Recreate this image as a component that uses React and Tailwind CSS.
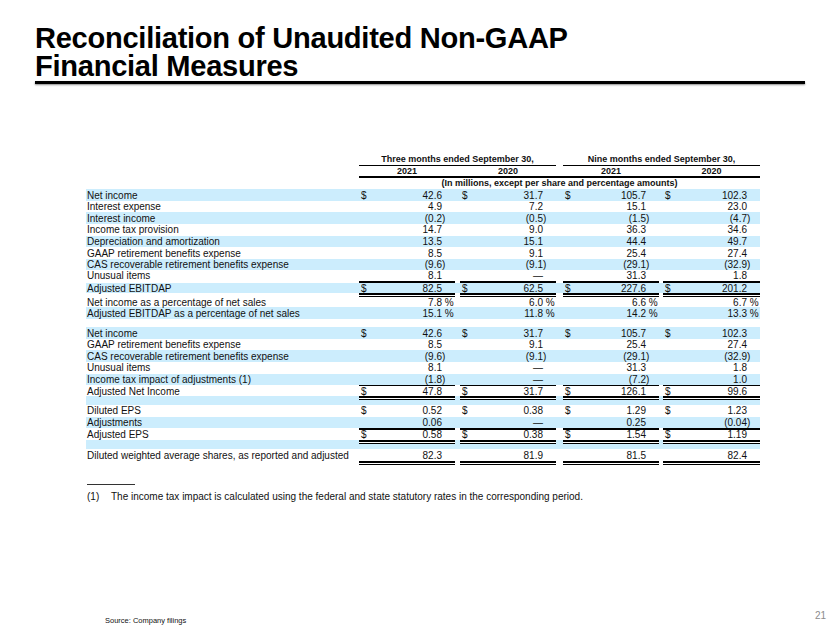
import React from "react";

const BLUE = "bg-[#ccedfd]";

const COLS = [
  "w-[96px]",
  "ml-[5px] w-[96px]",
  "ml-[7px] w-[96px]",
  "ml-[4px] w-[97px]",
];

function splitVal(v) {
  if (v.startsWith("(")) return [v.slice(0, -1), ")"];
  if (v.endsWith(" %")) return [v.slice(0, -2), "\u00a0%"];
  return [v, ""];
}

function Row({ label, vals, dollar, blue, h }) {
  return (
    <div className={`flex items-center ${h} ${blue ? BLUE : ""}`}>
      <div className="w-[273px] pl-[1px] whitespace-nowrap">{label}</div>
      {vals.map((v, i) => {
        const [num, suf] = splitVal(v);
        return (
          <div key={i} className={`${COLS[i]} flex items-center h-full`}>
            <span className="pl-[2px] w-[12px]">{dollar ? "$" : ""}</span>
            <span className="flex-1 text-right">{num}</span>
            <span className="w-[13px] whitespace-pre">{suf}</span>
          </div>
        );
      })}
    </div>
  );
}

function LineRow({ kind, h, blue }) {
  return (
    <div className={`flex ${h} ${blue ? BLUE : ""}`}>
      <div className="w-[273px]" />
      {COLS.map((c, i) => (
        <div
          key={i}
          className={`${c} ${
            kind === "single"
              ? "h-[1.5px] bg-black"
              : "h-[4px] border-t-2 border-b border-black bg-white"
          }`}
        />
      ))}
    </div>
  );
}

export default function App() {
  return (
    <div
      className="relative w-[840px] h-[630px] bg-white text-[#111] flex flex-col"
      style={{ fontFamily: '"Liberation Sans", Arial, sans-serif' }}
    >
      {/* Title */}
      <div className="pt-[24px] pl-[35px]">
        <h1 className="text-[30px] leading-[28px] font-bold tracking-[-0.3px] text-black origin-left scale-x-[0.97] whitespace-nowrap">
          <div>Reconciliation of Unaudited Non-GAAP</div>
          <div>Financial Measures</div>
        </h1>
      </div>
      <div className="ml-[35px] mt-[1px] w-[770px] h-[3px] bg-black shadow-[0_1px_2px_rgba(0,0,0,0.45)]" />

      {/* Table */}
      <div className="ml-[86px] mt-[70px] w-[674px] text-[10px]">
        <div className="flex h-[12px] text-[9px] font-bold">
          <div className="w-[273px]" />
          <div className="w-[197px] text-center leading-[11px] border-b border-black">
            Three months ended September 30,
          </div>
          <div className="ml-[7px] w-[197px] text-center leading-[11px] border-b border-black">
            Nine months ended September 30,
          </div>
        </div>
        <div className="flex h-[12px] text-[9px] font-bold">
          <div className="w-[273px]" />
          <div className="flex w-[401px] border-b-2 border-black leading-[10px]">
            {["2021", "2020", "2021", "2020"].map((y, i) => (
              <div key={i} className={`${COLS[i]} text-center`}>
                {y}
              </div>
            ))}
          </div>
        </div>
        <div className="flex h-[11.3px] items-center text-[9px] font-bold">
          <div className="w-[273px]" />
          <div className="w-[401px] text-center whitespace-nowrap">
            (In millions, except per share and percentage amounts)
          </div>
        </div>

        <Row h="h-[11.6px]" blue dollar label="Net income" vals={["42.6", "31.7", "105.7", "102.3"]} />
        <Row h="h-[11.6px]" label="Interest expense" vals={["4.9", "7.2", "15.1", "23.0"]} />
        <Row h="h-[11.6px]" blue label="Interest income" vals={["(0.2)", "(0.5)", "(1.5)", "(4.7)"]} />
        <Row h="h-[11.6px]" label="Income tax provision" vals={["14.7", "9.0", "36.3", "34.6"]} />
        <Row h="h-[11.6px]" blue label="Depreciation and amortization" vals={["13.5", "15.1", "44.4", "49.7"]} />
        <Row h="h-[11.6px]" label="GAAP retirement benefits expense" vals={["8.5", "9.1", "25.4", "27.4"]} />
        <Row h="h-[11.6px]" blue label="CAS recoverable retirement benefits expense" vals={["(9.6)", "(9.1)", "(29.1)", "(32.9)"]} />
        <Row h="h-[11px]" label="Unusual items" vals={["8.1", "\u2014", "31.3", "1.8"]} />
        <LineRow kind="single" h="h-[1.5px]" />
        <Row h="h-[10.5px]" blue dollar label="Adjusted EBITDAP" vals={["82.5", "62.5", "227.6", "201.2"]} />
        <LineRow kind="double" h="h-[4px]" />
        <Row h="h-[10px]" label="Net income as a percentage of net sales" vals={["7.8 %", "6.0 %", "6.6 %", "6.7 %"]} />
        <Row h="h-[11.8px]" blue label="Adjusted EBITDAP as a percentage of net sales" vals={["15.1 %", "11.8 %", "14.2 %", "13.3 %"]} />
        <div className="h-[8px]" />

        <Row h="h-[11.6px]" blue dollar label="Net income" vals={["42.6", "31.7", "105.7", "102.3"]} />
        <Row h="h-[11.6px]" label="GAAP retirement benefits expense" vals={["8.5", "9.1", "25.4", "27.4"]} />
        <Row h="h-[11.6px]" blue label="CAS recoverable retirement benefits expense" vals={["(9.6)", "(9.1)", "(29.1)", "(32.9)"]} />
        <Row h="h-[11.6px]" label="Unusual items" vals={["8.1", "\u2014", "31.3", "1.8"]} />
        <Row h="h-[11.2px]" blue label="Income tax impact of adjustments (1)" vals={["(1.8)", "\u2014", "(7.2)", "1.0"]} />
        <LineRow kind="single" h="h-[1.5px]" />
        <Row h="h-[10px]" dollar label="Adjusted Net Income" vals={["47.8", "31.7", "126.1", "99.6"]} />
        <LineRow kind="double" h="h-[4px]" blue />
        <div className={`h-[4.5px] ${BLUE}`} />

        <Row h="h-[12px]" dollar label="Diluted EPS" vals={["0.52", "0.38", "1.29", "1.23"]} />
        <Row h="h-[11.5px]" blue label="Adjustments" vals={["0.06", "\u2014", "0.25", "(0.04)"]} />
        <LineRow kind="single" h="h-[1.5px]" />
        <Row h="h-[10px]" dollar label="Adjusted EPS" vals={["0.58", "0.38", "1.54", "1.19"]} />
        <LineRow kind="double" h="h-[4px]" blue />
        <div className={`h-[5px] ${BLUE}`} />
        <Row h="h-[12.5px]" label="Diluted weighted average shares, as reported and adjusted" vals={["82.3", "81.9", "81.5", "82.4"]} />
        <LineRow kind="double" h="h-[4px]" />
      </div>

      {/* Footnote */}
      <div className="ml-[87px] mt-[19px] w-[48px] h-[1px] bg-[#333]" />
      <div className="ml-[87px] mt-[6px] flex text-[10px] leading-[12px]">
        <span className="w-[24px]">(1)</span>
        <span>
          The income tax impact is calculated using the federal and state statutory rates in the corresponding period.
        </span>
      </div>

      {/* Footer */}
      <div className="mt-auto pb-[5px] flex items-end justify-between pl-[105px] pr-[14px]">
        <span className="text-[7.5px] leading-[9px]">Source: Company filings</span>
        <span className="text-[10px] leading-[12px] text-[#8c8c8c] mb-[3px]">21</span>
      </div>
    </div>
  );
}
